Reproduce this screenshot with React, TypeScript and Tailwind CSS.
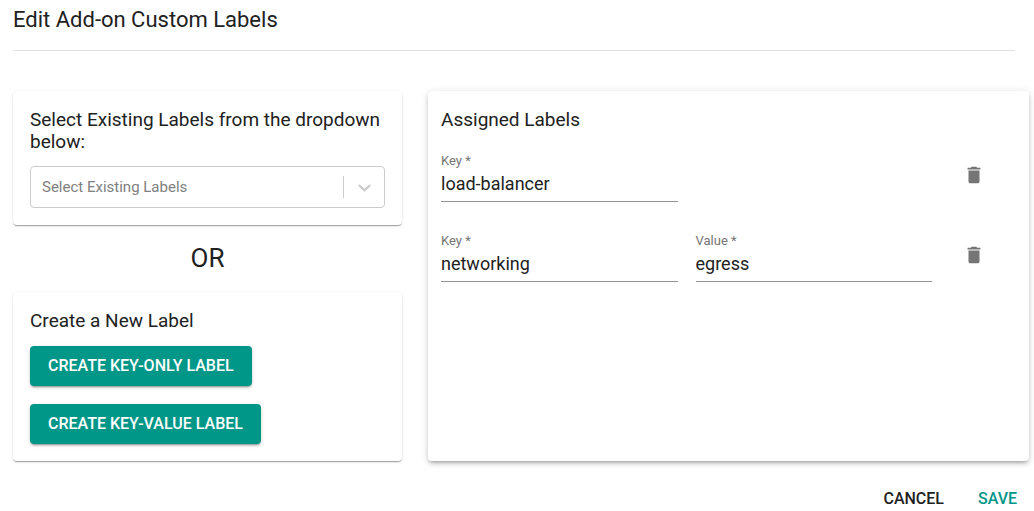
import React, { useState } from 'react';
import { MdDelete } from 'react-icons/md';

type Label = {
    id: number;
    key: string;
    value?: string;
};

const initialLabels: Label[] = [
    { id: 1, key: 'load-balancer' },
    { id: 2, key: 'networking', value: 'egress' },
];

const cardShadow = 'shadow-[0_2px_1px_-1px_rgba(0,0,0,0.2),0_1px_1px_0_rgba(0,0,0,0.14),0_1px_3px_0_rgba(0,0,0,0.12)]';

const TextField: React.FC<{
    id: string;
    label: string;
    value: string;
    onChange: (value: string) => void;
}> = ({ id, label, value, onChange }) => (
    <div className="flex min-w-0 flex-col">
        <label htmlFor={id} className="text-[13px] leading-4 text-[#757575]">
            {label} *
        </label>
        <input
            id={id}
            type="text"
            required
            value={value}
            onChange={(e) => onChange(e.target.value)}
            className="h-[33px] w-full border-b border-[#949494] bg-transparent pb-[3px] text-lg focus:border-[#009688] focus:outline-none"
        />
    </div>
);

const CreateButton: React.FC<{ children: React.ReactNode; onClick: () => void }> = ({ children, onClick }) => (
    <button
        type="button"
        onClick={onClick}
        className="h-10 rounded bg-[#009688] px-[18px] text-base font-medium text-white uppercase shadow-[0_3px_1px_-2px_rgba(0,0,0,0.2),0_2px_2px_0_rgba(0,0,0,0.14),0_1px_5px_0_rgba(0,0,0,0.12)] hover:bg-[#00796b]"
    >
        {children}
    </button>
);

const App: React.FC = () => {
    const [labels, setLabels] = useState<Label[]>(initialLabels);

    const addLabel = (withValue: boolean) => {
        setLabels([...labels, { id: Date.now(), key: '', value: withValue ? '' : undefined }]);
    };

    const updateLabel = (id: number, changes: Partial<Label>) => {
        setLabels(labels.map((l) => (l.id === id ? { ...l, ...changes } : l)));
    };

    return (
        <div className="bg-white pt-[5px] pr-[5px] pl-[13px] font-['Roboto',sans-serif] text-[#212121]">
            <header className="mr-[14px] border-b border-[#e0e0e0] pb-[15px]">
                <h1 className="text-[22px] leading-[30px]">Edit Add-on Custom Labels</h1>
            </header>

            <main className="mt-10 grid grid-cols-[389fr_601fr] gap-[26px]">
                <div className="flex flex-col">
                    <section className={`rounded bg-white px-[17px] pt-[18px] pb-[17px] ${cardShadow}`}>
                        <label htmlFor="existing-labels" className="block text-[19px] leading-[22px]">
                            Select Existing Labels from the dropdown below:
                        </label>
                        <div className="relative mt-[13px]">
                            <select
                                id="existing-labels"
                                defaultValue=""
                                className="h-[42px] w-full appearance-none rounded border border-[#cccccc] bg-white pr-12 pl-[11px] text-[15px] text-[#808080]"
                            >
                                <option value="">Select Existing Labels</option>
                                {initialLabels.map((l) => (
                                    <option key={l.id} value={l.key}>
                                        {l.key}
                                    </option>
                                ))}
                            </select>
                            <div className="pointer-events-none absolute inset-y-0 right-0 flex items-center text-[#cccccc]">
                                <span className="h-[22px] w-px bg-[#cccccc]" />
                                <svg viewBox="0 0 20 20" className="mx-[10px] size-[21px] fill-current">
                                    <path d="M4.516 7.548c0.436-0.446 1.043-0.481 1.576 0l3.908 3.747 3.908-3.747c0.533-0.481 1.141-0.446 1.574 0 0.436 0.445 0.408 1.197 0 1.615-0.406 0.418-4.695 4.502-4.695 4.502-0.217 0.223-0.502 0.335-0.787 0.335s-0.57-0.112-0.789-0.335c0 0-4.287-4.084-4.695-4.502s-0.436-1.17 0-1.615z" />
                                </svg>
                            </div>
                        </div>
                    </section>

                    <p className="pt-4 pb-[17px] text-center text-[26px] leading-[34px]">OR</p>

                    <section className={`flex flex-col items-start rounded bg-white px-[17px] pt-[18px] pb-[17px] ${cardShadow}`}>
                        <h2 className="text-[19px] leading-[22px]">Create a New Label</h2>
                        <div className="mt-[14px] flex flex-col items-start gap-[18px]">
                            <CreateButton onClick={() => addLabel(false)}>Create Key-Only Label</CreateButton>
                            <CreateButton onClick={() => addLabel(true)}>Create Key-Value Label</CreateButton>
                        </div>
                    </section>
                </div>

                <section className="rounded bg-white px-[13px] py-[18px] shadow-[0_3px_3px_-2px_rgba(0,0,0,0.2),0_3px_4px_0_rgba(0,0,0,0.14),0_1px_8px_0_rgba(0,0,0,0.12)]">
                    <h2 className="text-[19px] leading-[22px]">Assigned Labels</h2>
                    <div className="mt-[22px] flex flex-col gap-[31px]">
                        {labels.map((l) => (
                            <div key={l.id} className="grid grid-cols-[1fr_1fr_48px] gap-[18px] pr-[18px]">
                                <TextField
                                    id={`key-${l.id}`}
                                    label="Key"
                                    value={l.key}
                                    onChange={(key) => updateLabel(l.id, { key })}
                                />
                                {l.value !== undefined && (
                                    <TextField
                                        id={`value-${l.id}`}
                                        label="Value"
                                        value={l.value}
                                        onChange={(value) => updateLabel(l.id, { value })}
                                    />
                                )}
                                <button
                                    type="button"
                                    aria-label="Delete label"
                                    onClick={() => setLabels(labels.filter((other) => other.id !== l.id))}
                                    className="col-start-3 flex h-11 items-center justify-center text-[#757575]"
                                >
                                    <MdDelete className="size-[22px]" />
                                </button>
                            </div>
                        ))}
                    </div>
                </section>
            </main>

            <footer className="mt-[18px] flex justify-end gap-[18px] pr-1 text-base font-medium">
                <button type="button" className="h-10 px-2 uppercase">
                    Cancel
                </button>
                <button type="button" className="h-10 px-2 text-[#009688] uppercase">
                    Save
                </button>
            </footer>
        </div>
    );
};

export default App;
